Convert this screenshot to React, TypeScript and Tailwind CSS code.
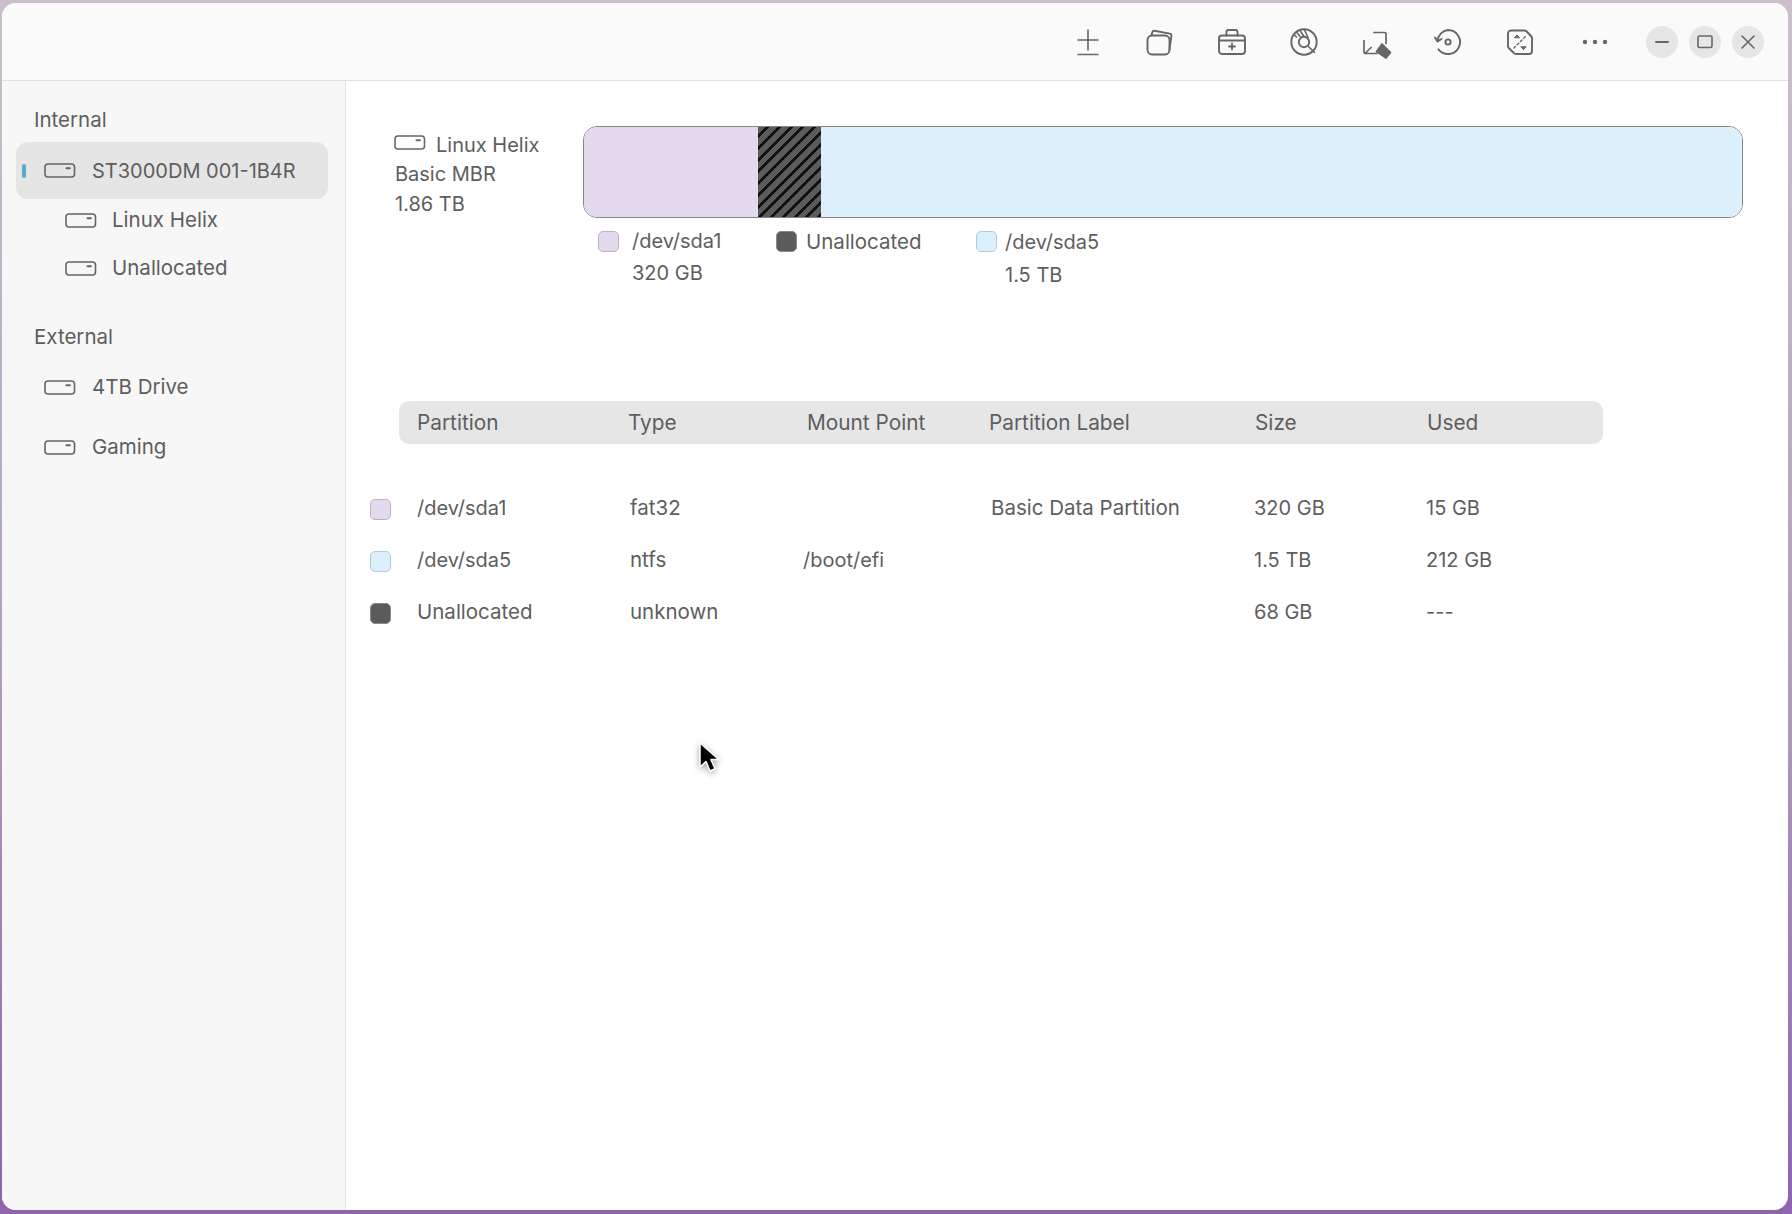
import React from "react";

const S = { fill: "none", stroke: "currentColor", strokeWidth: 1.6, strokeLinecap: "round" as const, strokeLinejoin: "round" as const };

function Drive({ className = "" }: { className?: string }) {
  return (
    <svg viewBox="0 0 32 17" className={`w-[32px] h-[17px] shrink-0 text-[#666666] ${className}`} {...S}>
      <rect x="1" y="2" width="29.5" height="13" rx="3" />
      <path d="M22.5 6.2h3.4" strokeWidth="2" />
    </svg>
  );
}

const icons: React.ReactNode[] = [
  <svg key="pm" viewBox="0 0 28 28" className="w-7 h-7" {...S}>
    <path d="M4 12h20M14 2v20M4 26.5h20" />
  </svg>,
  <svg key="cards" viewBox="0 0 28 28" className="w-7 h-7" {...S} strokeWidth="1.9">
    <path d="M5.5 7l1-3.2a1.5 1.5 0 0 1 1.8-1l15.5 2.8c1.2.2 1.8 1 1.6 2.2l-2 14" />
    <rect x="1.5" y="7.5" width="22" height="19" rx="4.5" />
  </svg>,
  <svg key="case" viewBox="0 0 28 28" className="w-7 h-7" {...S} strokeWidth="1.9">
    <rect x="1" y="7.5" width="26" height="18.5" rx="3" />
    <path d="M8.5 7.5V4a2 2 0 0 1 2-2h7a2 2 0 0 1 2 2v3.5M1 12.5h26" />
    <path d="M14 15.5v6M11 18.5h6" strokeWidth="1.8" />
  </svg>,
  <svg key="disc" viewBox="0 0 28 28" className="w-7 h-7" {...S} strokeWidth="1.9">
    <circle cx="14" cy="14" r="12.7" />
    <circle cx="14" cy="14" r="5.2" />
    <path d="M18 18l6.5 6.5M6.5 9l-2-2M10 8.5L6.5 4M14 8.5L10 2.5M18 9.5L14.5 2" strokeWidth="1.6" />
  </svg>,
  <svg key="erase" viewBox="0 0 30 30" className="w-[30px] h-[30px] overflow-visible" {...S} strokeWidth="1.7">
    <path d="M13 5.5h10.5a1.5 1.5 0 0 1 1.5 1.5v9.5M3 13.5V25a1.5 1.5 0 0 0 1.5 1.5H16M10 20.5l-6 6" />
    <path d="M21 17l8.5 8.5-4.5 5.5-9.5-6.5z" fill="currentColor" />
  </svg>,
  <svg key="restore" viewBox="0 0 28 28" className="w-7 h-7" {...S} strokeWidth="1.9">
    <path d="M3.5 13A12 12 0 0 1 14 2a12 12 0 1 1-9.5 19.3" />
    <path d="M1 9.5l2.5 4 4-2.5" />
    <circle cx="14" cy="14" r="2.6" />
  </svg>,
  <svg key="shuffle" viewBox="0 0 28 28" className="w-7 h-7" {...S} strokeWidth="1.9">
    <path d="M5 2.5h13.5c1 0 1.6.3 2.2 1L25 8a3 3 0 0 1 1 2.3V23a3 3 0 0 1-3 3H10c-1 0-1.6-.3-2.2-1l-5-5A3 3 0 0 1 2 18V5.5a3 3 0 0 1 3-3z" />
    <path d="M8 20L20 8" strokeDasharray="2 2.6" strokeWidth="1.4" />
    <path d="M8.5 9.5l2.5-2.6 2.5 2.6zM15 19l2.5 2.6L20 19z" fill="currentColor" strokeWidth="1" />
  </svg>,
  <svg key="more" viewBox="0 0 28 28" className="w-7 h-7" fill="currentColor">
    <circle cx="4" cy="14" r="2.2" />
    <circle cx="14" cy="14" r="2.2" />
    <circle cx="24" cy="14" r="2.2" />
  </svg>,
];

function Sw({ c, className = "" }: { c: string; className?: string }) {
  return <span className={`block w-[21px] h-[21px] rounded-[5px] border-[1.5px] shrink-0 ${c} ${className}`} />;
}

const lilac = "bg-[#e3daee] border-[#bfb0c8]";
const sky = "bg-[#dcf0fb] border-[#a9cfe0]";
const dark = "bg-[#5b5b5b] border-[#8a8a8a]";

function SideItem({ label, sub, active, className = "" }: { label: string; sub?: boolean; active?: boolean; className?: string }) {
  return (
    <div className={`relative flex items-center ${sub ? "pl-[49px] gap-[15px]" : "pl-[28px] gap-[16px]"} ${active ? "h-[57px] bg-[#e5e5e5] rounded-[12px]" : ""} ${className}`}>
      {active && <span className="absolute left-[6px] top-[22px] w-[4px] h-[14px] rounded-full bg-[#5aa9cf]" />}
      <Drive />
      <span className={active ? "text-[20px]" : ""}>{label}</span>
    </div>
  );
}

const rows = [
  { sw: lilac, a: "/dev/sda1", b: "fat32", c: "", d: "Basic Data Partition", e: "320 GB", f: "15 GB" },
  { sw: sky, a: "/dev/sda5", b: "ntfs", c: "/boot/efi", d: "", e: "1.5 TB", f: "212 GB" },
  { sw: dark, a: "Unallocated", b: "unknown", c: "", d: "", e: "68 GB", f: "---" },
];

export default function App() {
  return (
    <div className="w-[1792px] h-[1214px] overflow-hidden pt-[3px] pl-[2px] pr-[4px] pb-[4px] bg-gradient-to-b from-[#cbbfcc] via-[#b3a4bc] to-[#8f63ad] font-['Inter',sans-serif] text-[20.5px] leading-none text-[#5e5e5e]">
      <div className="relative w-full h-full flex flex-col rounded-[14px] overflow-hidden bg-white">
        <header className="h-[78px] shrink-0 flex items-center justify-end pr-[24px] bg-[#fafafa] border-b border-[#e0e0e0] text-[#666666]">
          {icons.map((ic, i) => (
            <div key={i} className={`w-[72px] flex items-center justify-center ${i === 7 ? "ml-[3px]" : ""}`}>{ic}</div>
          ))}
          <div className="flex gap-[11px] ml-[15px]">
            <button className="w-8 h-8 rounded-full bg-[#e6e6e6] flex items-center justify-center">
              <svg viewBox="0 0 16 16" className="w-4 h-4" {...S} strokeWidth="2"><path d="M2 8h12" /></svg>
            </button>
            <button className="w-8 h-8 rounded-full bg-[#e6e6e6] flex items-center justify-center">
              <svg viewBox="0 0 16 16" className="w-4 h-4" {...S}><rect x="1" y="2" width="14" height="11.5" rx="1.5" /></svg>
            </button>
            <button className="w-8 h-8 rounded-full bg-[#e6e6e6] flex items-center justify-center">
              <svg viewBox="0 0 16 16" className="w-4 h-4" {...S}><path d="M2 2l12 12M14 2L2 14" /></svg>
            </button>
          </div>
        </header>
        <div className="flex flex-1 min-h-0">
          <aside className="w-[344px] shrink-0 bg-[#f7f7f7] border-r border-[#e3e3e3] pt-[29px] pl-[14px] pr-[17px]">
            <div className="pl-[18px] h-[20px] flex items-center">Internal</div>
            <SideItem label="ST3000DM 001-1B4R" active className="mt-[12px]" />
            <SideItem label="Linux Helix" sub className="mt-[3px] h-[36px]" />
            <SideItem label="Unallocated" sub className="mt-[12px] h-[36px]" />
            <div className="pl-[18px] h-[20px] flex items-center mt-[41px]">External</div>
            <SideItem label="4TB Drive" className="mt-[22px] h-[36px]" />
            <SideItem label="Gaming" className="mt-[24px] h-[36px]" />
          </aside>
          <main className="flex-1 min-w-0 pt-[45px] pl-[25px] pr-[45px]">
            <div className="flex">
              <div className="w-[212px] pl-[24px] pt-[4px] shrink-0">
                <div className="flex items-center gap-[10px] h-[24px] -ml-[1px]">
                  <Drive />
                  <span className="relative top-[3px] text-[20px]">Linux Helix</span>
                </div>
                <div className="mt-[9px] h-[21px] flex items-center text-[20px]">Basic MBR</div>
                <div className="mt-[9px] h-[21px] flex items-center text-[20px]">1.86 TB</div>
              </div>
              <div className="flex-1 min-w-0">
                <div className="flex h-[92px] rounded-[14px] border border-[#858585] overflow-hidden">
                  <div className="w-[174px] bg-[#e3daee]" />
                  <div className="w-[63px] bg-[repeating-linear-gradient(135deg,#5b5b5b_0,#5b5b5b_5.5px,#111111_5.5px,#111111_8.3px)]" />
                  <div className="flex-1 bg-[#dcf0fb]" />
                </div>
                <div className="flex mt-[13px] pl-[15px] text-[20px]">
                  <div className="w-[178px] flex gap-[12px]">
                    <Sw c={lilac} />
                    <div className="ml-[1px]">
                      <div className="h-[19px] flex items-center">/dev/sda1</div>
                      <div className="mt-[13px] h-[19px] flex items-center">320 GB</div>
                    </div>
                  </div>
                  <div className="w-[200px] flex gap-[9px]">
                    <Sw c={dark} />
                    <div className="h-[21px] pt-[1px] flex items-center text-[20.5px]">Unallocated</div>
                  </div>
                  <div className="flex gap-[8px]">
                    <Sw c={sky} />
                    <div>
                      <div className="h-[21px] flex items-center">/dev/sda5</div>
                      <div className="mt-[13px] h-[19px] flex items-center">1.5 TB</div>
                    </div>
                  </div>
                </div>
              </div>
            </div>
            <div className="ml-[28px] mt-[117px] w-[1204px] h-[43px] pt-[1px] bg-[#e6e6e6] rounded-[10px] grid grid-cols-[211px_179px_182px_266px_172px_1fr] items-center pl-[18px] text-[20.8px]">
              <span>Partition</span>
              <span>Type</span>
              <span>Mount Point</span>
              <span>Partition Label</span>
              <span>Size</span>
              <span>Used</span>
            </div>
            <div className="mt-[54px] flex flex-col gap-[31px]">
              {rows.map((r) => (
                <div key={r.a} className="h-[21px] flex items-center -ml-[1px]">
                  <Sw c={r.sw} className="mt-[1px]" />
                  <div className="flex-1 grid grid-cols-[213px_173px_188px_263px_172px_1fr] items-baseline pl-[26px]">
                    <span className={r.a === "Unallocated" ? "" : "text-[20px]"}>{r.a}</span>
                    <span>{r.b}</span>
                    <span className="text-[20px]">{r.c}</span>
                    <span>{r.d}</span>
                    <span className="text-[20px]">{r.e}</span>
                    <span className="text-[20px]">{r.f}</span>
                  </div>
                </div>
              ))}
            </div>
          </main>
        </div>
        <svg viewBox="0 0 22 32" className="absolute left-[696px] top-[738px] w-[22px] h-[34px] drop-shadow-[0_2px_3px_rgba(0,0,0,0.35)]">
          <path d="M2 1v24l6-5.5 4 9.5 5-2.2-4-9.2h8z" fill="#000" stroke="#fff" strokeWidth="1.5" strokeLinejoin="round" />
        </svg>
      </div>
    </div>
  );
}
